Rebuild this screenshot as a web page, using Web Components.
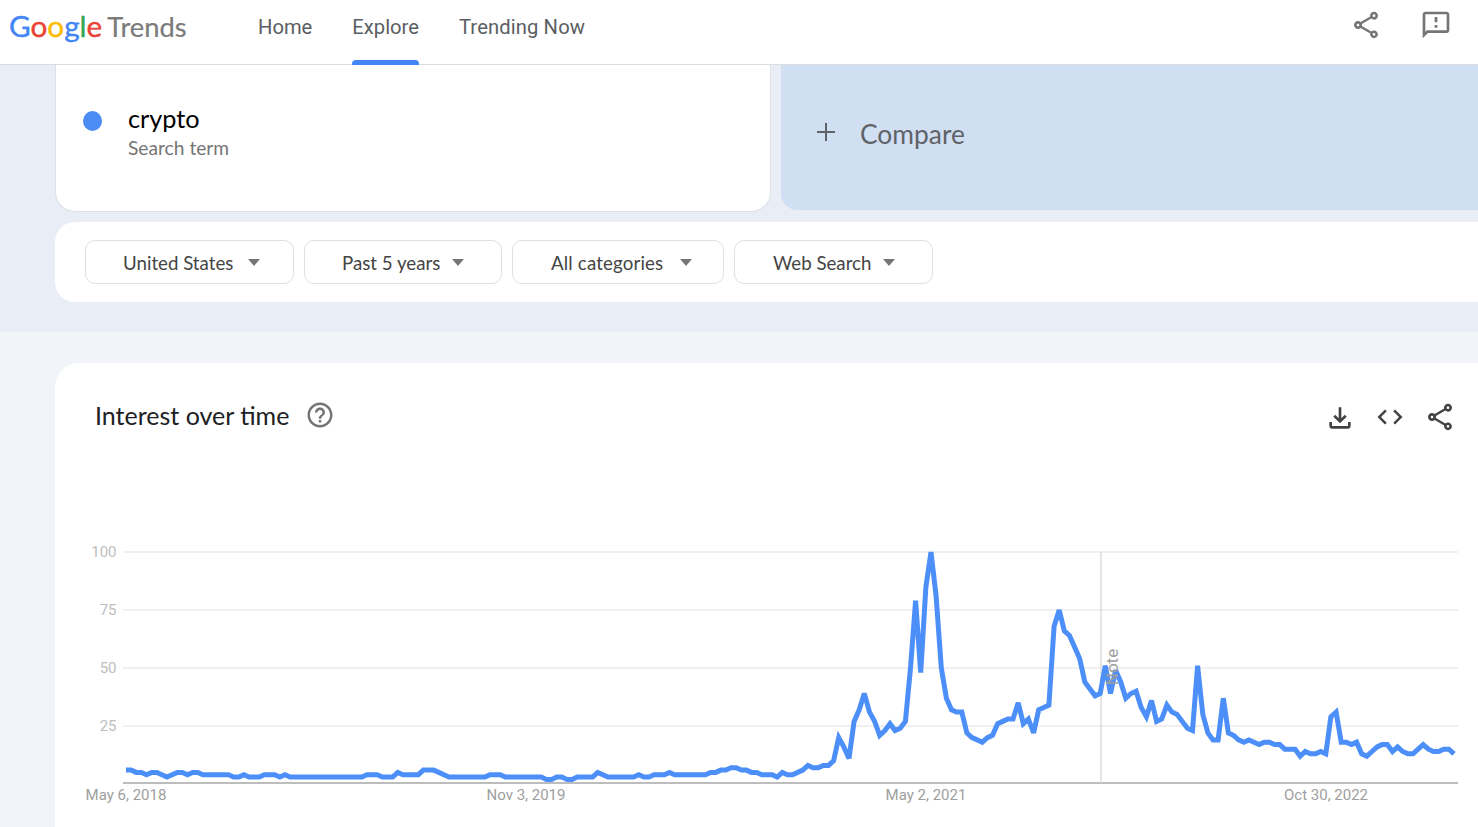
<!DOCTYPE html>
<html lang="en">
<head>
<meta charset="utf-8">
<title>Google Trends</title>
<style>
  html, body { margin: 0; height: 827px; overflow: hidden; background: #f1f4f9; font-family: Roboto, "Liberation Sans", sans-serif; }
</style>
</head>
<body>
<gt-header></gt-header>
<gt-explore-top>
  <gt-term-card slot="term" term="crypto" label="Search term"></gt-term-card>
  <gt-compare slot="compare"></gt-compare>
  <gt-filter slot="filter" style="width:209px;--gap:15px">United States</gt-filter>
  <gt-filter slot="filter" style="width:198px;--gap:12px">Past 5 years</gt-filter>
  <gt-filter slot="filter" style="width:212px;--gap:17px;--pad:38px;letter-spacing:.15px">All categories</gt-filter>
  <gt-filter slot="filter" style="width:199px;--gap:12px;--pad:38px">Web Search</gt-filter>
</gt-explore-top>
<gt-chart-card heading="Interest over time"></gt-chart-card>

<script>
const ICONS = {
  share: "M18 16.08c-.76 0-1.44.3-1.96.77L8.91 12.7c.05-.23.09-.46.09-.7s-.04-.47-.09-.7l7.05-4.11c.54.5 1.25.81 2.04.81 1.66 0 3-1.34 3-3s-1.34-3-3-3-3 1.34-3 3c0 .24.04.47.09.7L8.04 9.81C7.5 9.31 6.79 9 6 9c-1.66 0-3 1.34-3 3s1.34 3 3 3c.79 0 1.5-.31 2.04-.81l7.12 4.16c-.05.21-.08.43-.08.65 0 1.61 1.31 2.92 2.92 2.92s2.92-1.31 2.92-2.92c0-1.61-1.31-2.92-2.92-2.92zM18 4c.55 0 1 .45 1 1s-.45 1-1 1-1-.45-1-1 .45-1 1-1zM6 13c-.55 0-1-.45-1-1s.45-1 1-1 1 .45 1 1-.45 1-1 1zm12 7.02c-.55 0-1-.45-1-1s.45-1 1-1 1 .45 1 1-.45 1-1 1z",
  feedback: "M20 2H4c-1.1 0-2 .9-2 2v18l4-4h14c1.1 0 2-.9 2-2V4c0-1.1-.9-2-2-2zm0 14H5.17L4 17.17V4h16v12zm-9-4h2v2h-2zm0-6h2v4h-2z",
  download: "M18 15v3H6v-3H4v3c0 1.1.9 2 2 2h12c1.1 0 2-.9 2-2v-3h-2zm-1-4l-1.41-1.41L13 12.17V4h-2v8.17L8.41 9.59 7 11l5 5 5-5z",
  code: "M9.4 16.6L4.8 12l4.6-4.6L8 6l-6 6 6 6 1.4-1.4zm5.2 0l4.6-4.6-4.6-4.6L16 6l6 6-6 6-1.4-1.4z",
  help: "M11 18h2v-2h-2v2zm1-16C6.48 2 2 6.48 2 12s4.48 10 10 10 10-4.48 10-10S17.52 2 12 2zm0 18c-4.41 0-8-3.59-8-8s3.59-8 8-8 8 3.59 8 8-3.59 8-8 8zm0-14c-2.21 0-4 1.79-4 4h2c0-1.1.9-2 2-2s2 .9 2 2c0 2-3 1.75-3 5h2c0-2.25 3-2.5 3-5 0-2.21-1.79-4-4-4z",
};

function icon(name, size, color) {
  return `<svg xmlns="http://www.w3.org/2000/svg" width="${size}" height="${size}" viewBox="0 0 24 24" fill="${color}" style="display:block"><path d="${ICONS[name]}"/></svg>`;
}

class GtHeader extends HTMLElement {
  constructor() {
    super();
    this.attachShadow({ mode: "open" });
  }

  connectedCallback() {
    this.shadowRoot.innerHTML = `
      <style>
        :host { display: flex; align-items: stretch; height: 64px; background: #fff; border-bottom: 1px solid #dadce0; }
        .logo { flex: 0 0 258px; box-sizing: border-box; padding: 8px 0 0 9px; font: 400 29.7px/36px Lato, sans-serif; white-space: nowrap; }
        .google { -webkit-text-stroke: .4px; }
        .trends { color: #7b7b7b; margin-left: 5px; font-size: 27.3px; -webkit-text-stroke: .2px; }
        nav { display: flex; gap: 40px; flex: 1; }
        nav a { position: relative; color: #5a5e63; font: 400 20.2px/54px Roboto, sans-serif; }
        nav a:last-child { letter-spacing: .12px; }
        nav a.active::after { content: ""; position: absolute; left: 0; right: 0; bottom: -1px; height: 5px; background: #4285f4; border-radius: 4px 4px 0 0; }
        .actions { display: flex; align-items: flex-start; gap: 38px; padding: 9px 26px 0 0; }
      </style>
      <div class="logo"><span class="google"><span style="color:#4285f4">G</span><span style="color:#ea4335">o</span><span style="color:#fbbc05">o</span><span style="color:#4285f4">g</span><span style="color:#34a853">l</span><span style="color:#ea4335">e</span></span><span class="trends">Trends</span></div>
      <nav><a>Home</a><a class="active">Explore</a><a>Trending Now</a></nav>
      <div class="actions">${icon("share", 32, "#757575")}${icon("feedback", 32, "#757575")}</div>
    `;
  }
}

class GtExploreTop extends HTMLElement {
  constructor() {
    super();
    this.attachShadow({ mode: "open" });
  }

  connectedCallback() {
    this.shadowRoot.innerHTML = `
      <style>
        :host { display: block; height: 267px; box-sizing: border-box; background: #e8edf6; padding-left: 55px; }
        .terms { display: flex; gap: 10px; align-items: flex-start; }
        .filters { display: flex; gap: 10px; align-items: center; box-sizing: border-box; height: 80px; margin-top: 10px; padding-left: 30px; background: #fff; border-radius: 20px 0 0 20px; }
      </style>
      <div class="terms"><slot name="term"></slot><slot name="compare"></slot></div>
      <div class="filters"><slot name="filter"></slot></div>
    `;
  }
}

class GtTermCard extends HTMLElement {
  constructor() {
    super();
    this.attachShadow({ mode: "open" });
  }

  connectedCallback() {
    this.shadowRoot.innerHTML = `
      <style>
        :host { display: flex; flex: 0 0 716px; box-sizing: border-box; height: 147px; padding: 38px 0 0 27px; background: #fff; border: solid #dde1e8; border-width: 0 1px 1px; border-radius: 0 0 20px 20px; }
        .dot { width: 19px; height: 20px; margin: 8px 26px 0 0; border-radius: 50%; background: #4d8bf5; }
        .term { color: #000; font: 400 25.3px/30px Lato, sans-serif; }
        .label { color: #757575; font: 400 19.2px/29px Lato, sans-serif; }
      </style>
      <div class="dot"></div>
      <div>
        <div class="term">${this.getAttribute("term")}</div>
        <div class="label">${this.getAttribute("label")}</div>
      </div>
    `;
  }
}

class GtCompare extends HTMLElement {
  constructor() {
    super();
    this.attachShadow({ mode: "open" });
  }

  connectedCallback() {
    this.shadowRoot.innerHTML = `
      <style>
        :host { display: flex; align-items: center; flex: 1; box-sizing: border-box; height: 145px; padding: 0 0 7px 36px; gap: 25px; background: #d0dff2; border-radius: 0 0 0 16px; color: #5f6368; font: 400 26.4px/30px Lato, sans-serif; }
        svg { display: block; margin-top: -4px; }
      </style>
      <svg width="18" height="18" viewBox="0 0 18 18" fill="none" stroke="#5f6368" stroke-width="2"><path d="M9 0v18M0 9h18"/></svg>
      <span>Compare</span>
    `;
  }
}

class GtFilter extends HTMLElement {
  constructor() {
    super();
    this.attachShadow({ mode: "open" });
  }

  connectedCallback() {
    this.shadowRoot.innerHTML = `
      <style>
        :host { display: flex; align-items: center; gap: var(--gap, 15px); box-sizing: border-box; height: 44px; padding: 2px 0 0 var(--pad, 37px); background: #fff; border: 1px solid #e0e0e0; border-radius: 10px; color: #444; font: 400 18.7px/24px Lato, sans-serif; white-space: nowrap; }
        .arrow { width: 0; height: 0; margin-top: -2px; border: solid transparent; border-width: 7px 6.5px 0; border-top-color: #757575; }
      </style>
      <slot></slot><span class="arrow"></span>
    `;
  }
}

// weekly values read off the reference, 0..100
const SERIES = [
  6,6,5,5,4,5,5,4,3,4,5,5,4,5,5,4,4,4,4,4,4,3,3,4,3,3,3,4,4,4,3,4,3,3,3,3,3,3,3,3,3,3,3,3,3,3,3,
  4,4,4,3,3,3,5,4,4,4,4,6,6,6,5,4,3,3,3,3,3,3,3,3,4,4,4,3,3,3,3,3,3,3,3,2,2,3,3,2,2,3,3,3,3,5,4,3,3,3,3,3,3,4,3,3,4,4,4,5,
  4,4,4,4,4,4,4,5,5,6,6,7,7,6,6,5,5,4,4,4,3,5,4,4,5,6,8,7,7,8,
  8,10,20,16,11,27,32,39,31,27,21,23,26,23,24,27,50,79,48,85,100,81,50,37,32,31,31,22,20,19,18,20,21,26,27,28,28,35,26,28,22,32,33,34,68,75,66,64,59,54,44,41,38,39,
  51,39,49,44,37,39,40,33,29,36,27,28,34,31,30,27,24,23,51,30,22,19,19,37,22,21,19,18,19,18,17,18,18,17,17,15,15,15,12,14,13,13,14,13,29,31,18,18,17,18,13,12,14,16,17,17,14,16,14,13,13,15,17,15,14,14,15,15,13,
];

class GtChartCard extends HTMLElement {
  constructor() {
    super();
    this.attachShadow({ mode: "open" });
  }

  connectedCallback() {
    const step = 1328 / (SERIES.length - 1);
    const points = SERIES.map((v, i) => `${(126 + i * step).toFixed(1)},${(784 - v * 2.32).toFixed(1)}`).join(" ");
    const grid = [[100, 552], [75, 610], [50, 668], [25, 726]]
      .map(([v, y]) => `<line x1="123" x2="1458" y1="${y}" y2="${y}" stroke="#e2e2e2" stroke-width="1.2"/><text class="y" x="116.5" y="${y + 5}">${v}</text>`)
      .join("");
    const dates = [["May 6, 2018", 126], ["Nov 3, 2019", 526], ["May 2, 2021", 926], ["Oct 30, 2022", 1326]]
      .map(([t, x]) => `<text class="x" x="${x}" y="800">${t}</text>`)
      .join("");

    this.shadowRoot.innerHTML = `
      <style>
        :host { display: block; height: 464px; margin: 31px 0 0 55px; background: #fff; border-radius: 24px 0 0 0; overflow: hidden; }
        .head { display: flex; align-items: center; height: 87px; box-sizing: border-box; padding: 16px 22px 0 40px; }
        h2 { margin: 0 16px 0 0; color: #202124; font: 400 25px/30px Lato, sans-serif; }
        .tools { display: flex; align-items: center; gap: 19px; margin: 4px 0 0 auto; }
        .tools svg:first-child { margin-top: 2px; }
        svg.chart { display: block; }
        text { font-family: Roboto, sans-serif; font-size: 15px; }
        .y { fill: #bdbdbd; text-anchor: end; }
        .x { fill: #9e9e9e; text-anchor: middle; }
        .note { fill: #9e9e9e; font-size: 17px; text-anchor: middle; }
      </style>
      <div class="head">
        <h2>${this.getAttribute("heading")}</h2>
        ${icon("help", 30, "#757575")}
        <div class="tools">${icon("download", 32, "#424242")}${icon("code", 30, "#424242")}${icon("share", 32, "#424242")}</div>
      </div>
      <svg class="chart" xmlns="http://www.w3.org/2000/svg" width="1423" height="377" viewBox="55 450 1423 377">
        ${grid}
        <line x1="123" x2="1458" y1="783" y2="783" stroke="#bdbdbd" stroke-width="2"/>
        <line x1="1101" x2="1101" y1="552" y2="783" stroke="#dcdcdc" stroke-width="1.5"/>
        <polyline points="${points}" fill="none" stroke="#4d8ff8" stroke-width="5" stroke-linejoin="miter" stroke-miterlimit="3"/>
        <text class="note" transform="translate(1117.5 667) rotate(-90)">Note</text>
        ${dates}
      </svg>
    `;
  }
}

customElements.define("gt-header", GtHeader);
customElements.define("gt-explore-top", GtExploreTop);
customElements.define("gt-term-card", GtTermCard);
customElements.define("gt-compare", GtCompare);
customElements.define("gt-filter", GtFilter);
customElements.define("gt-chart-card", GtChartCard);
</script>
</body>
</html>
